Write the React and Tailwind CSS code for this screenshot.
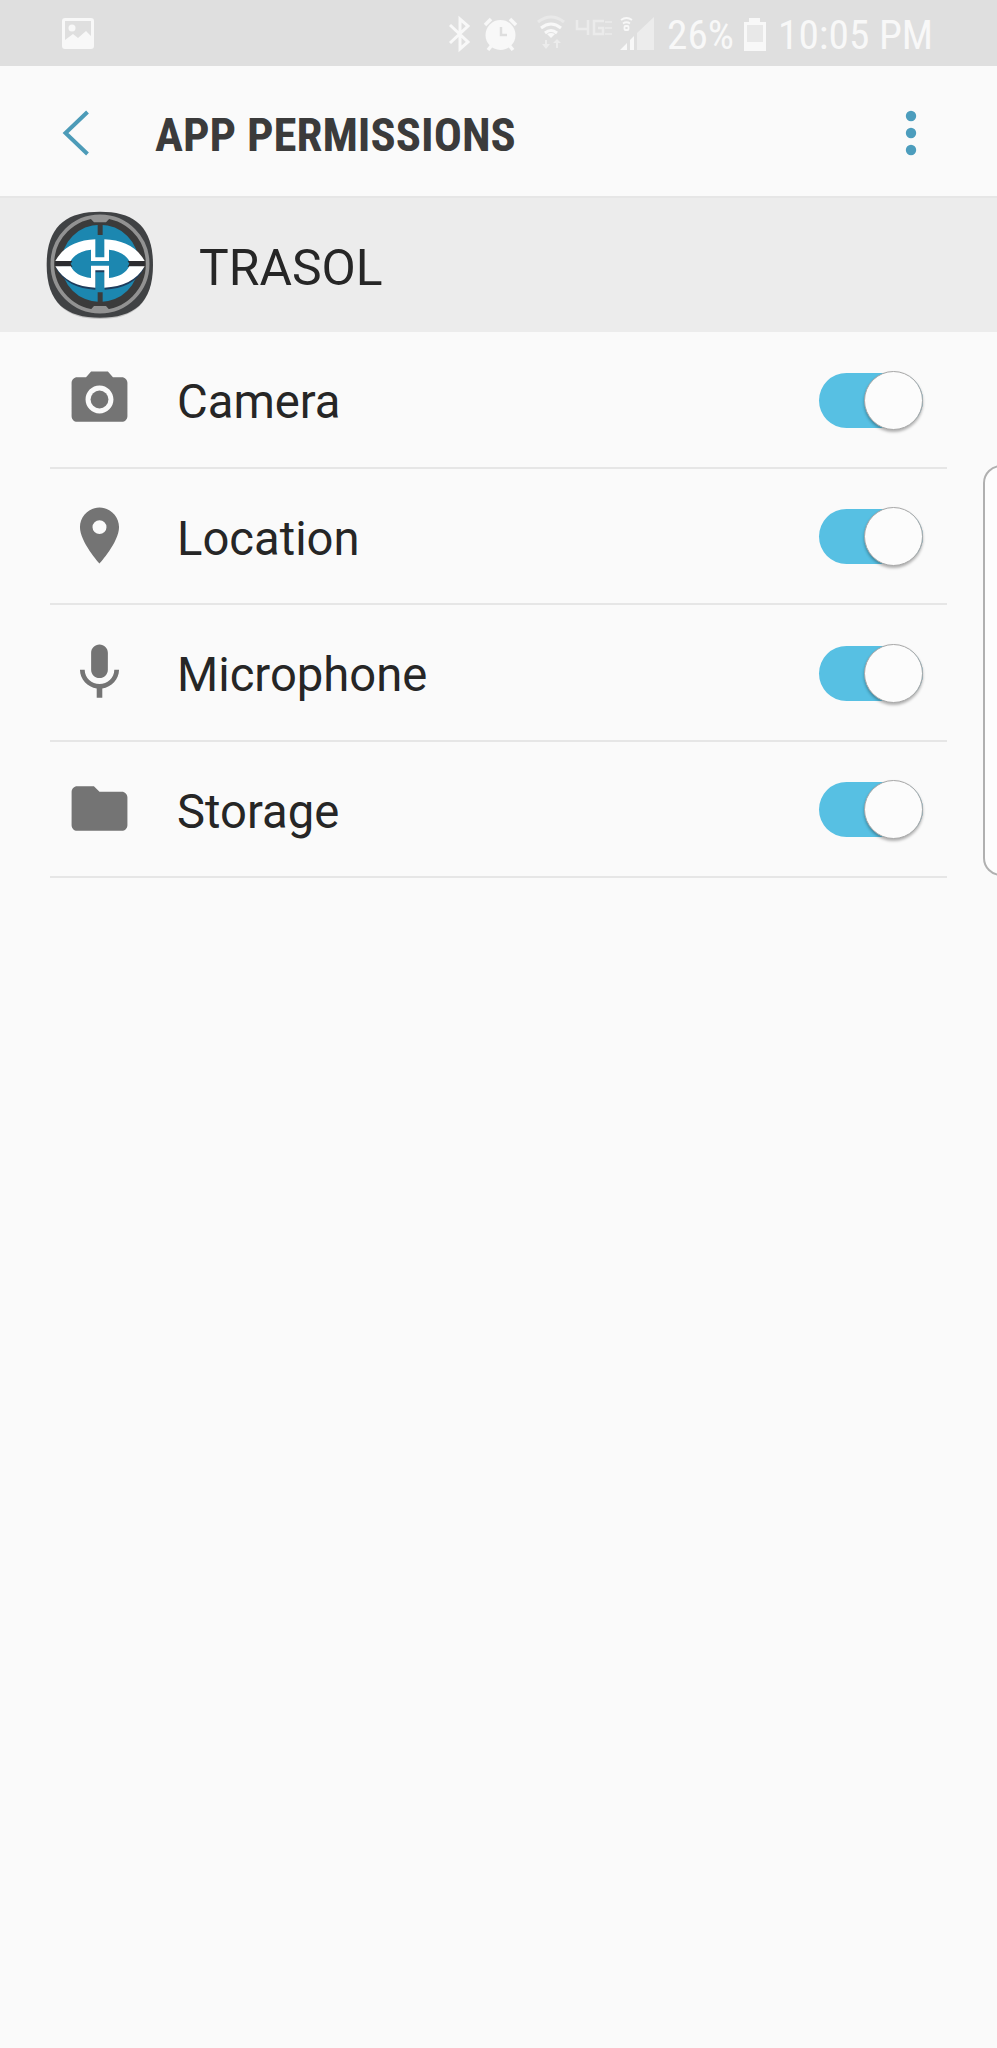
import { useState } from "react";

const permissions = [
  { name: "Camera", Icon: CameraIcon },
  { name: "Location", Icon: LocationIcon },
  { name: "Microphone", Icon: MicIcon },
  { name: "Storage", Icon: FolderIcon },
];

function CameraIcon() {
  return (
    <svg viewBox="0 0 24 24" className="size-[67px] shrink-0" fill="#747474">
      <path d="M9 2 7.170 4H4c-1.100 0-2 .9-2 2v12c0 1.100.9 2 2 2h16c1.100 0 2-.9 2-2V6c0-1.100-.9-2-2-2h-3.170L15 2H9zm3 15c-2.760 0-5-2.240-5-5s2.240-5 5-5 5 2.240 5 5-2.240 5-5 5z" />
      <circle cx="12" cy="12" r="3.200" />
    </svg>
  );
}

function LocationIcon() {
  return (
    <svg viewBox="0 0 24 24" className="size-[67px] shrink-0" fill="#747474">
      <path d="M12 2C8.130 2 5 5.130 5 9c0 5.250 7 13 7 13s7-7.750 7-13c0-3.870-3.130-7-7-7zm0 9.500a2.500 2.500 0 0 1 0-5 2.500 2.500 0 0 1 0 5z" />
    </svg>
  );
}

function MicIcon() {
  return (
    <svg viewBox="0 0 24 24" className="size-[67px] shrink-0" fill="#747474">
      <path d="M12 14c1.660 0 2.990-1.340 2.990-3L15 5c0-1.660-1.340-3-3-3S9 3.340 9 5v6c0 1.660 1.340 3 3 3zm5.300-3c0 3-2.540 5.100-5.300 5.100S6.700 14 6.700 11H5c0 3.410 2.720 6.230 6 6.720V21h2v-3.280c3.280-.48 6-3.300 6-6.720h-1.700z" />
    </svg>
  );
}

function FolderIcon() {
  return (
    <svg viewBox="0 0 24 24" className="size-[67px] shrink-0" fill="#747474">
      <path d="M10 4H4c-1.100 0-1.990.9-1.990 2L2 18c0 1.100.9 2 2 2h16c1.100 0 2-.9 2-2V8c0-1.100-.9-2-2-2h-8l-2-2z" />
    </svg>
  );
}

function AppLogo() {
  return (
    <svg viewBox="18 18 324 324" className="size-[108px] shrink-0">
      <path
        d="M180 26C278 26 337 66 337 183S278 342 180 342 23 300 23 183 82 26 180 26z"
        fill="#c4c4c4"
      />
      <path
        d="M180 20C282 20 339 64 339 179S282 338 180 338 20 294 20 179 78 20 180 20z"
        fill="#404244"
      />
      <circle cx="180" cy="177" r="143" fill="#3b3b3b" stroke="#929292" strokeWidth="11" />
      <path d="M152 33h56v8l-10 11h-36l-10-11zM152 322h56v-8l-10-11h-36l-10 11z" fill="#929292" />
      <circle cx="180" cy="175" r="116" fill="#1c87b0" />
      <path d="M173 56h15v34h-15zM173 262h15v36h-15z" fill="#3b3b3b" />
      <path d="M46 168h268v17H46z" fill="#2c2c30" />
      <path d="M92 176C106 151 126 141 153 136v31h54v-31c27 5 47 15 61 40-14 27-34 38-61 44v-34h-54v34c-27-6-47-17-61-44z" fill="#1c87b0" />
      <path
        d="M48 190C72 232 112 252 166 254v-52h28v52c54-2 96-22 118-64h-44c-10 20-30 34-61 36v-41h-54v41c-31-2-51-16-61-36z"
        fill="#1d3c5c"
      />
      <path
        d="M46 168C70 125 112 105 166 103v54h27v-54c55 2 97 22 121 65h-46c-10-17-30-31-61-34v34h-54v-34c-31 3-51 17-61 34z"
        fill="#fff"
      />
      <path
        d="M46 184C70 226 112 246 166 248v-52h27v52c55-2 97-22 121-64h-46c-10 20-30 32-61 35v-37h-54v37c-31-3-51-15-61-35z"
        fill="#fff"
      />
    </svg>
  );
}

function StatusBar() {
  return (
    <div className="flex h-[66px] bg-[#dfdfdf] font-['Roboto_Condensed'] text-[41.400px] leading-[66px] text-[#f8f8f8]">
      <svg viewBox="0 0 32 31" className="mt-[18px] ml-[62px] h-[31px] w-8">
        <path
          fillRule="evenodd"
          d="M3 0h26q3 0 3 3v25q0 3-3 3H3q-3 0-3-3V3q0-3 3-3zM3 3v19l8-6 5 4 8-7 5 5V3z"
          fill="#f8f8f8"
        />
        <circle cx="10" cy="10" r="3.500" fill="#f8f8f8" />
      </svg>

      {/* bluetooth, alarm, wifi, 4G LTE and signal strength */}
      <svg viewBox="446 0 212 66" className="ml-[352px] h-[66px] w-[212px]" fill="none">
        <path d="M450 25l18 17-8 7V19l8 7-18 17" stroke="#f8f8f8" strokeWidth="3" />
        <g stroke="#f8f8f8" strokeWidth="3.500">
          <path d="M485 25l6-6M516 25l-6-6M488 50l4-5M513 50l-4-5" />
          <circle cx="500.500" cy="35" r="15" fill="#f8f8f8" stroke="none" />
          <path d="M501 27v8h6" stroke="#dedede" strokeWidth="2.500" />
        </g>
        <path d="M538 22q13-10 26 0" stroke="#e9e9e9" strokeWidth="3" />
        <path d="M541 28q10-8 20 0M545 33q6-5 12 0" stroke="#f8f8f8" strokeWidth="3" />
        <path d="M547 34q4-2 8 0l-4 4z" fill="#f8f8f8" />
        <path d="M545 40v4h-3l4 5 4-5h-3v-4zM556 48v-5h-3l4-4 4 4h-3v5z" fill="#ececec" />
        <path d="M577 20v9h12M588 20v15M604 21h-10v13h9v-6h-5" stroke="#ebebeb" strokeWidth="2.500" />
        <path d="M605 22h7M605 28h7M605 34h7" stroke="#e8e8e8" strokeWidth="2" />
        <path d="M621 20q5.500-4 11 0M623 23.500q3.500-2.500 7 0" stroke="#f8f8f8" strokeWidth="1.800" />
        <rect x="624.500" y="26" width="4" height="4" rx="1" stroke="#f8f8f8" strokeWidth="1.800" />
        <path d="M637 50V33l17-16v33z" fill="#ececec" />
        <path d="M620 50l7-7v7zM630 50v-10l4-4v14z" fill="#f8f8f8" />
      </svg>

      <span className="ml-[9px] w-[77px] whitespace-nowrap pt-[2px]">26%</span>
      <svg viewBox="0 0 22 33" className="mt-[18px] h-[33px] w-[22px]">
        <path d="M0 4h5V0h11v4h6v29H0z" fill="#f8f8f8" />
        <path d="M3 7h16v17H3z" fill="#e8e8e8" />
      </svg>
      <span className="ml-[12px] whitespace-nowrap pt-[2px]">10:05 PM</span>
    </div>
  );
}

function Toggle({ checked, onChange, label }) {
  return (
    <button
      role="switch"
      aria-checked={checked}
      aria-label={label}
      onClick={onChange}
      className={`mt-[2px] flex h-[55px] w-[104px] items-center rounded-full ${
        checked ? "justify-end bg-[#57c0e3]" : "justify-start bg-[#c4c4c4]"
      }`}
    >
      <span className="size-[59px] shrink-0 rounded-full border border-[#a8a8a8] bg-[#fcfcfc] shadow-[0_2px_3px_rgba(0,0,0,0.3)]" />
    </button>
  );
}

export default function App() {
  const [enabled, setEnabled] = useState({
    Camera: true,
    Location: true,
    Microphone: true,
    Storage: true,
  });

  const toggle = (name) => {
    setEnabled({ ...enabled, [name]: !enabled[name] });
  };

  return (
    <div className="relative h-[2048px] w-[997px] overflow-hidden bg-[#fafafa] font-['Roboto'] text-[#262626]">
      <StatusBar />

      <header className="flex h-[132px] items-center border-b-2 border-[#e6e6e6] pt-[3px] pl-[62px] pr-[80px]">
        <svg viewBox="0 0 28 46" className="h-[46px] w-7" fill="none">
          <path d="M25.500 2 3.500 23l22 21" stroke="#4c9bb8" strokeWidth="4" />
        </svg>
        <h1 className="ml-[65px] flex-1 whitespace-nowrap pt-[6px] font-['Roboto_Condensed'] text-[46.800px] leading-none font-bold text-[#3b3b3b]">
          APP PERMISSIONS
        </h1>
        <svg viewBox="0 0 12 46" className="h-[46px] w-3" fill="#4c9dbd">
          <circle cx="6" cy="6" r="5.200" />
          <circle cx="6" cy="23" r="5.200" />
          <circle cx="6" cy="40" r="5.200" />
        </svg>
      </header>

      <div className="flex h-[134px] items-center bg-[#ececec] pl-[46px]">
        <AppLogo />
        <span className="ml-[45px] pt-[8px] text-[49.800px] leading-none">TRASOL</span>
      </div>

      <main className="px-[50px]">
        {permissions.map(({ name, Icon }) => (
          <div
            key={name}
            className="flex h-[136.500px] items-center border-b-2 border-[#e6e6e6] pr-6 pl-4"
          >
            <Icon />
            <span className="ml-[44px] flex-1 pt-[7px] text-[47.200px] leading-none">{name}</span>
            <Toggle checked={enabled[name]} onChange={() => toggle(name)} label={name} />
          </div>
        ))}
      </main>

      {/* edge panel handle */}
      <div className="absolute top-[465px] left-[983px] h-[411px] w-10 rounded-[18px] border-2 border-[#b0b0b0] bg-[#fdfdfd]" />
    </div>
  );
}
